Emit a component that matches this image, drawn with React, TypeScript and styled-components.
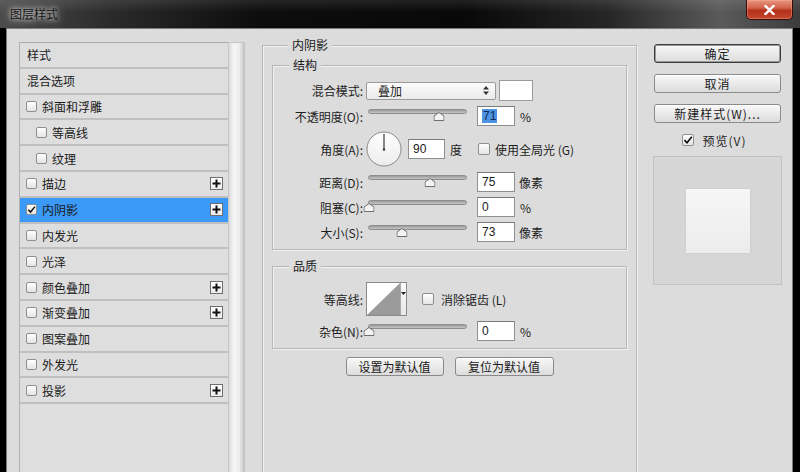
import styled, { createGlobalStyle } from 'styled-components';

const FONT = `"Noto Sans CJK SC", "Noto Sans", "Liberation Sans", sans-serif`;

const GlobalStyle = createGlobalStyle`
  html, body {
    margin: 0;
    padding: 0;
    background: #000;
  }
  body {
    font-family: ${FONT};
    font-size: 12px;
    color: #1e1e1e;
  }
  #root {
    width: 800px;
    height: 472px;
    overflow: hidden;
  }
`;

const Window = styled.div`
  width: 800px;
  height: 472px;
  display: flex;
  flex-direction: column;
  background: #000;
  overflow: hidden;
`;

const TitleBar = styled.div`
  height: 28px;
  flex: none;
  display: flex;
  align-items: flex-start;
  padding-left: 10px;
  background:
    linear-gradient(rgba(255, 255, 255, 0.1), rgba(255, 255, 255, 0) 45%),
    linear-gradient(90deg, #4c4c4c 0%, #2a2a2a 14%, #0d0d0d 32%, #080808 58%, #262626 76%, #5a5a5a 90%, #3c3c3c 100%);
`;

const Title = styled.div`
  margin-top: 5px;
  font-size: 12px;
  line-height: 18px;
  color: #151515;
  text-shadow:
    0 0 4px rgba(225, 225, 225, 0.95),
    0 0 8px rgba(200, 200, 200, 0.8),
    0 0 12px rgba(170, 170, 170, 0.6);
`;

const CloseButton = styled.div`
  margin-left: auto;
  margin-right: 7px;
  width: 47px;
  height: 20px;
  box-sizing: border-box;
  border: 1px solid #3a0d06;
  border-top: none;
  border-radius: 0 0 5px 5px;
  display: flex;
  align-items: center;
  justify-content: center;
  background: linear-gradient(#e8967f 0%, #d2624a 42%, #b5321b 55%, #c5462c 100%);
  box-shadow: inset 0 0 0 1px rgba(255, 190, 170, 0.35);
`;

const Frame = styled.div`
  flex: 1;
  display: flex;
  padding: 0 7px 0 6px;
  min-height: 0;
`;

const Body = styled.div`
  flex: 1;
  display: flex;
  align-items: flex-start;
  padding: 13px 0 0 12px;
  background: #dcdcdc;
  border: 1px solid #7c7c7c;
  border-bottom: none;
  overflow: hidden;
`;

/* ---------- left list ---------- */

const LeftCol = styled.div`
  display: flex;
  align-self: stretch;
  flex: none;
`;

const ListPanel = styled.div`
  width: 209px;
  box-sizing: border-box;
  border-top: 1px solid #a9a9a9;
  border-left: 1px solid #b2b2b2;
  background: #dedede;
`;

const ListRow = styled.div<{ $indent: number; $selected?: boolean }>`
  height: 25.8px;
  box-sizing: border-box;
  display: flex;
  align-items: center;
  padding-left: ${p => p.$indent}px;
  padding-right: 5px;
  border-bottom: 2px solid #c0c0c0;
  background: ${p => (p.$selected ? '#3b99f7' : 'transparent')};
  font-size: 12px;
  color: #1a1a1a;
`;

const ListLabel = styled.span`
  margin-left: 5px;
`;

const ScrollStrip = styled.div`
  width: 17px;
  box-sizing: border-box;
  border-left: 1px solid #c6c6c6;
  border-top: 1px solid #c6c6c6;
  background: linear-gradient(90deg, #dadada 0%, #f6f6f6 30%, #ececec 65%, #bdbdbd 100%);
`;

const Check = styled.span<{ $size: number }>`
  width: ${p => p.$size}px;
  height: ${p => p.$size}px;
  box-sizing: border-box;
  flex: none;
  display: inline-flex;
  align-items: center;
  justify-content: center;
  border: 1px solid #8e8e8e;
  border-radius: 2px;
  background: linear-gradient(#ffffff, #e4e4e4);
`;

const PlusBox = styled.span`
  margin-left: auto;
  width: 13px;
  height: 13px;
  box-sizing: border-box;
  display: inline-flex;
  align-items: center;
  justify-content: center;
  border: 1px solid #6e6e6e;
  background: linear-gradient(#ffffff, #ededed);
`;

/* ---------- middle ---------- */

const MiddleCol = styled.div`
  margin-left: 17px;
  margin-top: 3px;
  width: 375px;
  flex: none;
`;

const GroupBox = styled.div<{ $top?: number }>`
  display: flex;
  flex-direction: column;
  margin-top: ${p => p.$top ?? 0}px;
  border: 1px solid #b6b6b6;
  box-shadow: inset 1px 1px 0 #f2f2f2, 1px 1px 0 #f2f2f2;
`;

const OuterGroup = styled(GroupBox)`
  height: 460px;
  padding: 0 9px;
`;

const Legend = styled.div`
  align-self: flex-start;
  margin: -8px 0 0 16px;
  padding: 0 4px;
  height: 14px;
  line-height: 14px;
  background: #dcdcdc;
  color: #1a1a1a;
`;

const Rows = styled.div<{ $top: number }>`
  display: flex;
  flex-direction: column;
  gap: 5px;
  padding: ${p => p.$top}px 0 7px;
`;

const FormRow = styled.div<{ $h: number }>`
  height: ${p => p.$h}px;
  display: flex;
  align-items: center;
`;

const FieldLabel = styled.span`
  width: 90px;
  flex: none;
  text-align: right;
  white-space: nowrap;
  color: #1e1e1e;
`;

const Select = styled.div`
  margin-left: 3px;
  width: 130px;
  height: 18px;
  box-sizing: border-box;
  display: flex;
  align-items: center;
  padding: 0 6px 0 11px;
  border: 1px solid #9a9a9a;
  border-radius: 2px;
  background: linear-gradient(#fbfbfb, #ebebeb);
`;

const SelectArrows = styled.svg`
  margin-left: auto;
`;

const Swatch = styled.div`
  margin-left: 3px;
  width: 34px;
  height: 21px;
  box-sizing: border-box;
  border: 1px solid #9c9c9c;
  background: #fff;
`;

const SliderBox = styled.div`
  position: relative;
  width: 99px;
  height: 20px;
  margin-left: 5px;
  flex: none;
`;

const Track = styled.div`
  margin-top: 3px;
  height: 5px;
  box-sizing: border-box;
  border: 1px solid #8c8c8c;
  border-radius: 3px;
  background: linear-gradient(#9a9a9a, #c6c6c6);
`;

const Thumb = styled.svg`
  position: absolute;
  top: 6px;
  transform: translateX(-50%);
`;

const NumBox = styled.div<{ $ml: number; $w?: number }>`
  margin-left: ${p => p.$ml}px;
  width: ${p => p.$w ?? 38}px;
  height: 20px;
  box-sizing: border-box;
  flex: none;
  display: flex;
  align-items: center;
  padding-left: 4px;
  border: 1px solid #8f8f8f;
  border-top-color: #7a7a7a;
  background: #fff;
  font-family: "Liberation Sans", sans-serif;
  font-size: 12px;
  color: #1a1a1a;
`;

const Selected = styled.span`
  background: #4d93e2;
  color: #0b2a55;
  padding: 0 1px;
  line-height: 14px;
`;

const Unit = styled.span<{ $ml?: number }>`
  margin-left: ${p => p.$ml ?? 5}px;
  white-space: nowrap;
`;

const Dial = styled.svg`
  margin-left: 3px;
  flex: none;
`;

const Contour = styled.div`
  margin-left: 3px;
  width: 41px;
  height: 34px;
  box-sizing: border-box;
  display: flex;
  border: 1px solid #8a8a8a;
  background: #fff;
`;

const ContourDrop = styled.div`
  flex: 1;
  display: flex;
  justify-content: center;
  padding-top: 9px;
  border-left: 1px solid #a8a8a8;
  background: linear-gradient(#fafafa, #e8e8e8);
`;

const ButtonRow = styled.div`
  display: flex;
  justify-content: center;
  gap: 11px;
  margin-top: 8px;
`;

const Button = styled.div<{ $w?: number; $default?: boolean; $spacing?: number }>`
  width: ${p => (p.$w ? `${p.$w}px` : 'auto')};
  height: 19px;
  box-sizing: border-box;
  display: flex;
  align-items: center;
  justify-content: center;
  border: 1px solid ${p => (p.$default ? '#3c3c3c' : '#8a8a8a')};
  border-radius: 3px;
  background: linear-gradient(#f8f8f8, #dcdcdc);
  box-shadow: ${p => (p.$default ? 'inset 0 0 0 1px #9a9a9a' : 'inset 0 1px 0 #ffffff')};
  font-size: 12px;
  letter-spacing: ${p => p.$spacing ?? 0}px;
  color: #1a1a1a;
  white-space: nowrap;
`;

/* ---------- right ---------- */

const RightCol = styled.div`
  margin-left: 16px;
  margin-top: 2px;
  width: 129px;
  flex: none;
  display: flex;
  flex-direction: column;
`;

const SideButton = styled(Button)`
  margin: 0 1px 11px;
`;

const PreviewRow = styled.div`
  height: 18px;
  margin-top: -3px;
  display: flex;
  align-items: center;
  justify-content: center;
  gap: 8px;
  padding-right: 6px;
  font-size: 12px;
  letter-spacing: 1px;
`;

const PreviewBox = styled.div`
  margin-top: 7px;
  height: 129px;
  box-sizing: border-box;
  display: flex;
  align-items: center;
  justify-content: center;
  border: 1px solid #c2c2c2;
  background: #d6d6d6;
`;

const PreviewSwatch = styled.div`
  width: 64px;
  height: 64px;
  background: linear-gradient(#f6f6f6, #ececec);
  box-shadow: 0 0 2px rgba(0, 0, 0, 0.08);
`;

/* ---------- small drawings ---------- */

const CheckMark = ({ size }: { size: number }) => (
  <svg width={size - 2} height={size - 2} viewBox="0 0 10 10">
    <path d="M1.5 5.2 L4 7.8 L8.8 1.8" fill="none" stroke="#111" strokeWidth="1.7" />
  </svg>
);

const CheckBox = ({ checked, size = 11 }: { checked?: boolean; size?: number }) => (
  <Check $size={size}>{checked && <CheckMark size={size} />}</Check>
);

const Plus = () => (
  <PlusBox>
    <svg width="9" height="9" viewBox="0 0 9 9">
      <rect x="3.5" y="0.5" width="2" height="8" fill="#111" />
      <rect x="0.5" y="3.5" width="8" height="2" fill="#111" />
    </svg>
  </PlusBox>
);

const Slider = ({ pct }: { pct: number }) => (
  <SliderBox>
    <Track />
    <Thumb width="11" height="9" viewBox="0 0 11 9" style={{ left: `${pct}%` }}>
      <polygon points="5.5,0.5 10.5,4 10.5,8.5 0.5,8.5 0.5,4" fill="#f3f3f3" stroke="#6f6f6f" />
    </Thumb>
  </SliderBox>
);

interface LayerItem {
  label: string;
  check?: boolean;
  checked?: boolean;
  sub?: boolean;
  plus?: boolean;
  selected?: boolean;
}

const layerItems: LayerItem[] = [
  { label: '样式' },
  { label: '混合选项' },
  { label: '斜面和浮雕', check: true },
  { label: '等高线', check: true, sub: true },
  { label: '纹理', check: true, sub: true },
  { label: '描边', check: true, plus: true },
  { label: '内阴影', check: true, checked: true, plus: true, selected: true },
  { label: '内发光', check: true },
  { label: '光泽', check: true },
  { label: '颜色叠加', check: true, plus: true },
  { label: '渐变叠加', check: true, plus: true },
  { label: '图案叠加', check: true },
  { label: '外发光', check: true },
  { label: '投影', check: true, plus: true },
];

export default function App() {
  return (
    <Window>
      <GlobalStyle />
      <TitleBar>
        <Title>图层样式</Title>
        <CloseButton>
          <svg width="11" height="10" viewBox="0 0 11 10">
            <path d="M1.5 1 L9.5 9 M9.5 1 L1.5 9" stroke="#fff" strokeWidth="2.4" strokeLinecap="square" />
          </svg>
        </CloseButton>
      </TitleBar>
      <Frame>
        <Body>
          <LeftCol>
            <ListPanel>
              {layerItems.map(item => (
                <ListRow
                  key={item.label}
                  $indent={item.check ? (item.sub ? 16 : 6) : 7}
                  $selected={item.selected}
                >
                  {item.check && <CheckBox checked={item.checked} />}
                  {item.check ? <ListLabel>{item.label}</ListLabel> : <span>{item.label}</span>}
                  {item.plus && <Plus />}
                </ListRow>
              ))}
            </ListPanel>
            <ScrollStrip />
          </LeftCol>

          <MiddleCol>
            <OuterGroup>
              <Legend>内阴影</Legend>
              <GroupBox $top={13}>
                <Legend>结构</Legend>
                <Rows $top={8}>
                  <FormRow $h={21}>
                    <FieldLabel>混合模式:</FieldLabel>
                    <Select>
                      叠加
                      <SelectArrows width="6" height="9" viewBox="0 0 6 9">
                        <polygon points="3,0 6,3.5 0,3.5" fill="#333" />
                        <polygon points="0,5.5 6,5.5 3,9" fill="#333" />
                      </SelectArrows>
                    </Select>
                    <Swatch />
                  </FormRow>
                  <FormRow $h={20}>
                    <FieldLabel>不透明度(O):</FieldLabel>
                    <Slider pct={72} />
                    <NumBox $ml={10}>
                      <Selected>71</Selected>
                    </NumBox>
                    <Unit>%</Unit>
                  </FormRow>
                  <FormRow $h={36}>
                    <FieldLabel>角度(A):</FieldLabel>
                    <Dial width="36" height="36" viewBox="0 0 36 36">
                      <defs>
                        <linearGradient id="dialFill" x1="0" y1="0" x2="0" y2="1">
                          <stop offset="0" stopColor="#ffffff" />
                          <stop offset="1" stopColor="#ececec" />
                        </linearGradient>
                      </defs>
                      <circle cx="18" cy="18" r="17" fill="url(#dialFill)" stroke="#8a8a8a" />
                      <line x1="18" y1="18.5" x2="18" y2="3" stroke="#3a3a3a" strokeWidth="1.2" />
                      <circle cx="18" cy="18.5" r="1.2" fill="#3a3a3a" />
                    </Dial>
                    <NumBox $ml={6} $w={37}>90</NumBox>
                    <Unit>度</Unit>
                    <Unit $ml={16}>
                      <CheckBox size={12} />
                    </Unit>
                    <Unit>使用全局光 (G)</Unit>
                  </FormRow>
                  <FormRow $h={20}>
                    <FieldLabel>距离(D):</FieldLabel>
                    <Slider pct={63} />
                    <NumBox $ml={10}>75</NumBox>
                    <Unit $ml={4}>像素</Unit>
                  </FormRow>
                  <FormRow $h={20}>
                    <FieldLabel>阻塞(C):</FieldLabel>
                    <Slider pct={1} />
                    <NumBox $ml={10}>0</NumBox>
                    <Unit>%</Unit>
                  </FormRow>
                  <FormRow $h={20}>
                    <FieldLabel>大小(S):</FieldLabel>
                    <Slider pct={34} />
                    <NumBox $ml={10}>73</NumBox>
                    <Unit $ml={4}>像素</Unit>
                  </FormRow>
                </Rows>
              </GroupBox>

              <GroupBox $top={16}>
                <Legend>品质</Legend>
                <Rows $top={9}>
                  <FormRow $h={34}>
                    <FieldLabel>等高线:</FieldLabel>
                    <Contour>
                      <svg width="33" height="32" viewBox="0 0 33 32">
                        <polygon points="0,32 33,0 33,32" fill="#9b9b9b" />
                      </svg>
                      <ContourDrop>
                        <svg width="5" height="3" viewBox="0 0 5 3">
                          <polygon points="0,0 5,0 2.5,3" fill="#222" />
                        </svg>
                      </ContourDrop>
                    </Contour>
                    <Unit $ml={15}>
                      <CheckBox size={12} />
                    </Unit>
                    <Unit $ml={7}>消除锯齿 (L)</Unit>
                  </FormRow>
                  <FormRow $h={20}>
                    <FieldLabel>杂色(N):</FieldLabel>
                    <Slider pct={1} />
                    <NumBox $ml={10}>0</NumBox>
                    <Unit>%</Unit>
                  </FormRow>
                </Rows>
              </GroupBox>

              <ButtonRow>
                <Button $w={98}>设置为默认值</Button>
                <Button $w={99}>复位为默认值</Button>
              </ButtonRow>
            </OuterGroup>
          </MiddleCol>

          <RightCol>
            <SideButton $default $spacing={1}>确定</SideButton>
            <SideButton $spacing={1}>取消</SideButton>
            <SideButton $spacing={1}>新建样式(W)...</SideButton>
            <PreviewRow>
              <CheckBox checked size={12} />
              <span>预览(V)</span>
            </PreviewRow>
            <PreviewBox>
              <PreviewSwatch />
            </PreviewBox>
          </RightCol>
        </Body>
      </Frame>
    </Window>
  );
}
